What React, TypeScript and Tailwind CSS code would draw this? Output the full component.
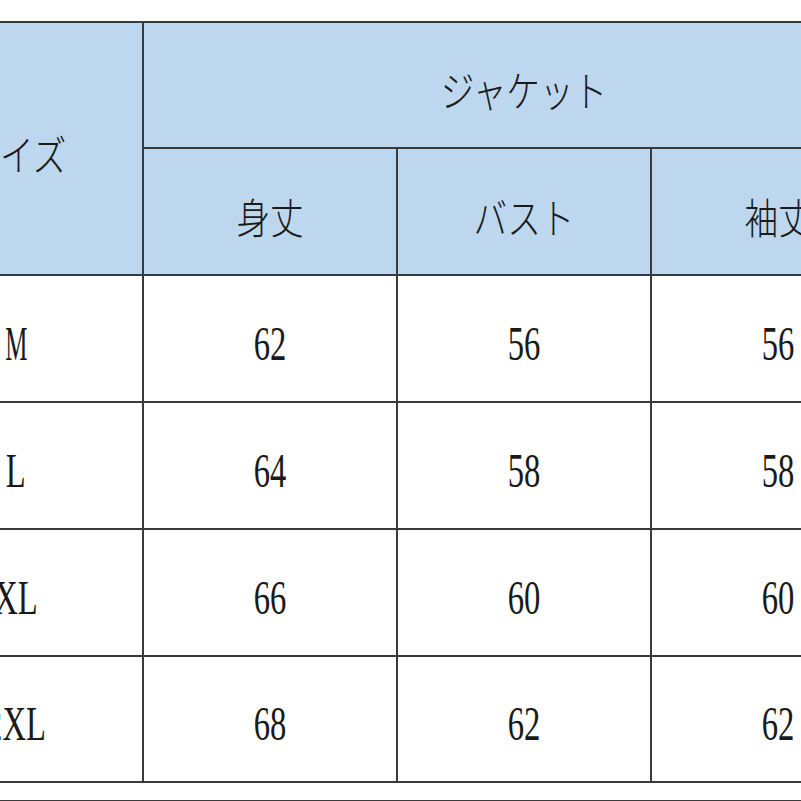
const cols = ['身丈', 'バスト', '袖丈'];

const rows = [
    { size: 'M', values: ['62', '56', '56'] },
    { size: 'L', values: ['64', '58', '58'] },
    { size: 'XL', values: ['66', '60', '60'] },
    { size: '2XL', values: ['68', '62', '62'] },
];

const jp = "[font-family:'Noto_Sans_CJK_JP','Noto_Sans',sans-serif]";

function Num({ children, narrow }: { children: string; narrow?: boolean }) {
    return (
        <span
            className={`inline-block ${narrow ? 'scale-x-[0.52]' : 'scale-x-[0.68]'} pt-[10px] text-[48px] leading-none text-[#1a1a1a] [font-family:'Liberation_Serif',serif]`}
        >
            {children}
        </span>
    );
}

function Jp({ children }: { children: string }) {
    return (
        <span className={`inline-block scale-x-[0.8] pt-[8px] text-[42px] font-light leading-none text-[#1a1a1a] ${jp}`}>
            {children}
        </span>
    );
}

export default function App() {
    return (
        <div className="w-[801px] h-[801px] bg-white overflow-hidden flex flex-col">
            <div className="mt-[21px] ml-[-112px]">
                <div className="grid w-max grid-cols-[252px_252px_252px_252px] grid-rows-[124px_125px_125px_125px_125px_124px] gap-[2px] p-[2px] bg-[#3a3a3a]">
                    {/* header */}
                    <div className="row-span-2 bg-[#bdd7ee] flex items-center justify-center">
                        <Jp>サイズ</Jp>
                    </div>
                    <div className="col-span-3 bg-[#bdd7ee] flex items-center justify-center">
                        <Jp>ジャケット</Jp>
                    </div>
                    {cols.map((c) => (
                        <div key={c} className="bg-[#bdd7ee] flex items-center justify-center">
                            <Jp>{c}</Jp>
                        </div>
                    ))}

                    {/* body */}
                    {rows.map((r) => (
                        <>
                            <div key={r.size} className="bg-white flex items-center justify-center">
                                <Num narrow={r.size === 'M'}>{r.size}</Num>
                            </div>
                            {r.values.map((v, i) => (
                                <div key={r.size + i} className="bg-white flex items-center justify-center">
                                    <Num>{v}</Num>
                                </div>
                            ))}
                        </>
                    ))}
                </div>
            </div>
            <div className="flex-1" />
            <div className="h-px bg-[#3a3a3a]" />
        </div>
    );
}
